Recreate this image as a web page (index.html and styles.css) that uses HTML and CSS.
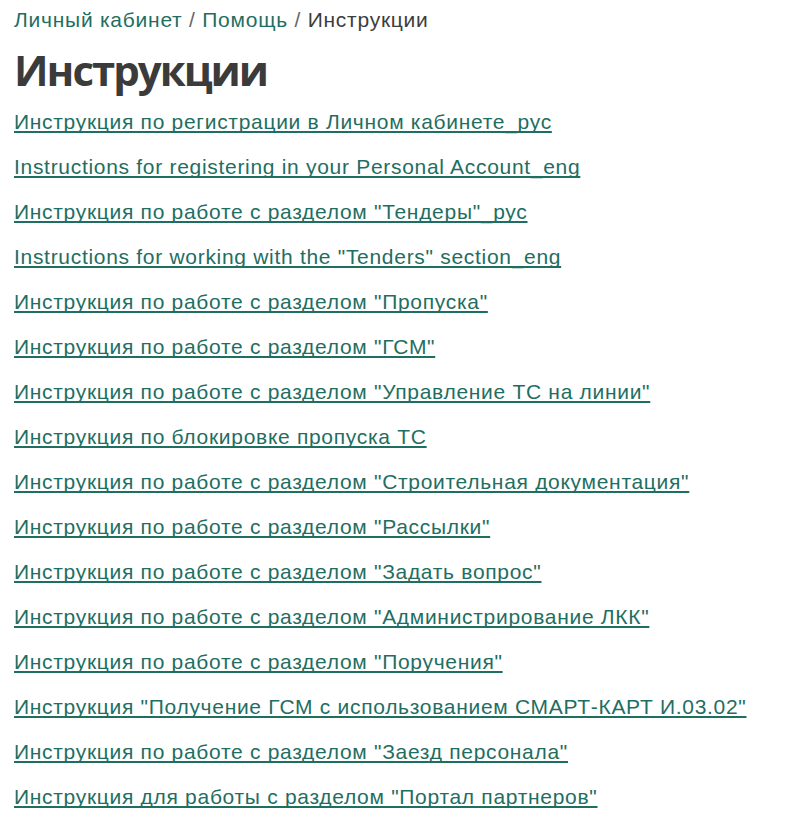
FILE: index.html
```html
<!DOCTYPE html>
<html lang="ru">
<head>
<meta charset="utf-8">
<title>Инструкции</title>
<link rel="stylesheet" href="styles.css">
</head>
<body>
<div class="page">
  <nav class="crumbs">
    <a href="#" class="crumb-link">Личный кабинет</a><span class="sep"> / </span><a href="#" class="crumb-link">Помощь</a><span class="sep"> / </span><span class="crumb-current">Инструкции</span>
  </nav>
  <h1 class="title">Инструкции</h1>
  <ul class="docs">
    <li><a href="#">Инструкция по регистрации в Личном кабинете_рус</a></li>
    <li><a href="#">Instructions for registering in your Personal Account_eng</a></li>
    <li><a href="#">Инструкция по работе с разделом "Тендеры"_рус</a></li>
    <li><a href="#">Instructions for working with the "Tenders" section_eng</a></li>
    <li><a href="#">Инструкция по работе с разделом "Пропуска"</a></li>
    <li><a href="#">Инструкция по работе с разделом "ГСМ"</a></li>
    <li><a href="#">Инструкция по работе с разделом "Управление ТС на линии"</a></li>
    <li><a href="#">Инструкция по блокировке пропуска ТС</a></li>
    <li><a href="#">Инструкция по работе с разделом "Строительная документация"</a></li>
    <li><a href="#">Инструкция по работе с разделом "Рассылки"</a></li>
    <li><a href="#">Инструкция по работе с разделом "Задать вопрос"</a></li>
    <li><a href="#">Инструкция по работе с разделом "Администрирование ЛКК"</a></li>
    <li><a href="#">Инструкция по работе с разделом "Поручения"</a></li>
    <li><a href="#">Инструкция "Получение ГСМ с использованием СМАРТ-КАРТ И.03.02"</a></li>
    <li><a href="#">Инструкция по работе с разделом "Заезд персонала"</a></li>
    <li><a href="#">Инструкция для работы с разделом "Портал партнеров"</a></li>
  </ul>
</div>
</body>
</html>
```
FILE: styles.css
```css
html, body {
  margin: 0;
  padding: 0;
  background: #ffffff;
}
.page {
  padding: 8px 14px 0 14px;
  font-family: "Liberation Sans", Arial, sans-serif;
}
.crumbs {
  font-size: 21px;
  line-height: 24px;
  letter-spacing: 0.75px;
  color: #777;
}
.crumb-link {
  color: #1f6e62;
  text-decoration: none;
}
.sep {
  color: #666;
}
.crumb-current {
  color: #3d3d3d;
}
.title {
  margin: 12px 0 14px 0;
  font-family: "Open Sans", sans-serif;
  font-weight: 700;
  font-size: 42px;
  line-height: 52px;
  letter-spacing: -2px;
  color: #3b3b3b;
}
.docs {
  list-style: none;
  margin: 0;
  padding: 0;
  display: flex;
  flex-direction: column;
  gap: 21px;
}
.docs li {
  font-size: 21px;
  line-height: 24px;
}
.docs a {
  color: #1f6e62;
  text-decoration: underline;
  text-decoration-skip-ink: none;
  text-decoration-thickness: 1.5px;
  text-underline-offset: 2px;
  letter-spacing: 0.7px;
}
```
